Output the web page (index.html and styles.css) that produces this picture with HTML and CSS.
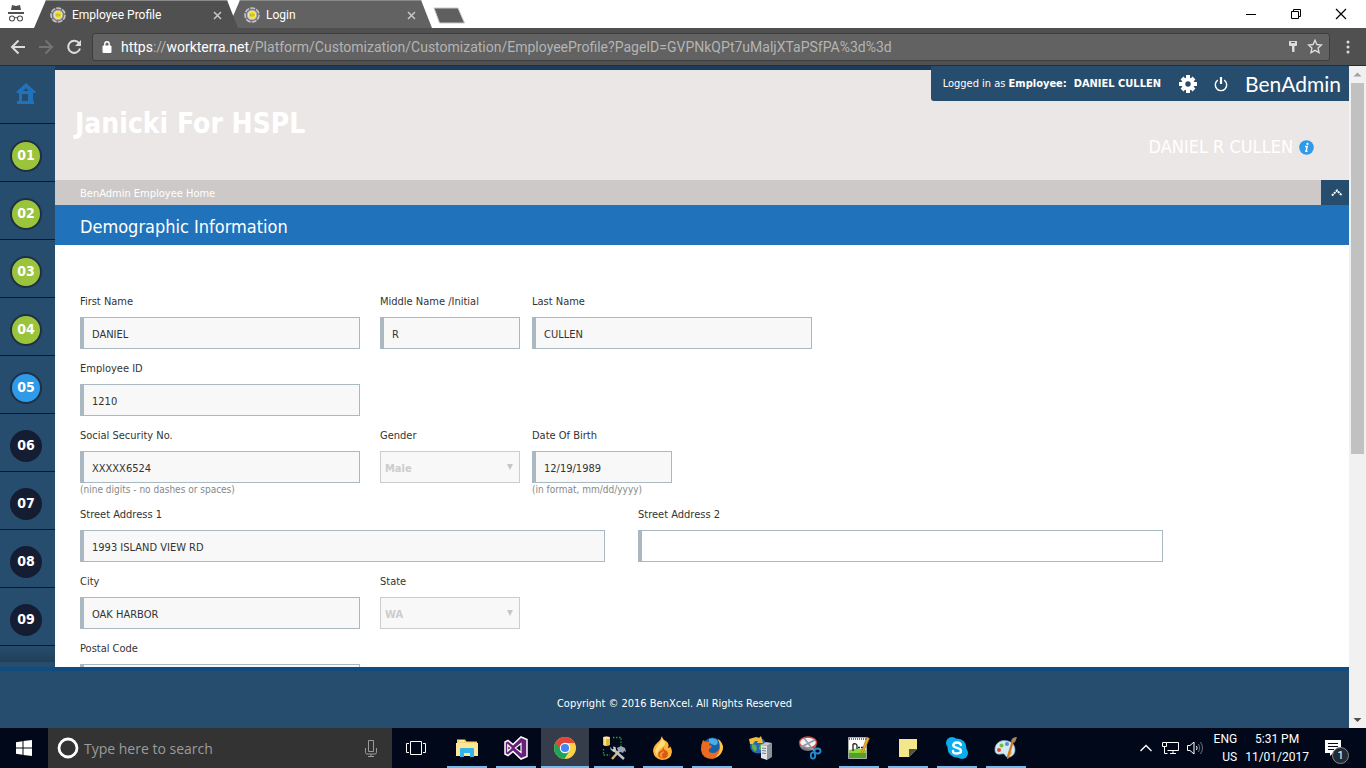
FILE: index.html
```html
<!DOCTYPE html>
<html lang="en">
<head>
<meta charset="utf-8">
<title>Employee Profile</title>
<link rel="stylesheet" href="styles.css">
</head>
<body>
<svg class="defs" width="0" height="0" aria-hidden="true">
  <symbol id="favicon" viewBox="0 0 16 16">
    <circle cx="8" cy="8" r="7" fill="#6d6d6d" stroke="#c4c4c4" stroke-width="1.600" stroke-dasharray="5 1.200"/>
    <circle cx="8" cy="8" r="4.800" fill="#e2e2e2" stroke="#adadad" stroke-width="1"/>
    <path d="M8 4l3 1.800v4L8 12 5 9.800v-4z" fill="#f4e41a"/>
    <path d="M6 7.300h4v1.500H6z" fill="#fbf27a" stroke="#b59b16" stroke-width=".7"/>
  </symbol>
  <symbol id="close" viewBox="0 0 9 9"><path d="M1 1l7 7M8 1L1 8" stroke="#c8c8c8" stroke-width="1.5" fill="none"/></symbol>
</svg>

<header class="tabstrip">
  <svg class="incognito" width="18" height="18" viewBox="0 0 18 18">
    <path d="M5 0l4 1 4-1 1 5H4zM1 7h16v2H1z" fill="#505050"/>
    <g fill="none" stroke="#505050" stroke-width="1.1"><circle cx="5" cy="13.5" r="2.5"/><circle cx="13" cy="13.5" r="2.5"/><path d="M7.4 13q1.6-1 3.200 0"/></g>
  </svg>
  <div class="tab tab-active">
    <svg width="16" height="16"><use href="#favicon"/></svg>
    <span class="tab-title">Employee Profile</span>
    <button class="plain" aria-label="Close tab"><svg width="9" height="9"><use href="#close"/></svg></button>
  </div>
  <div class="tab">
    <svg width="16" height="16"><use href="#favicon"/></svg>
    <span class="tab-title">Login</span>
    <button class="plain" aria-label="Close tab"><svg width="9" height="9"><use href="#close"/></svg></button>
  </div>
  <button class="plain new-tab" aria-label="New tab"><svg width="34" height="17" viewBox="0 0 34 17"><path d="M2 1h24l6.500 15h-25z" fill="#5f5f5f" stroke="#c9c9c9"/></svg></button>
  <div class="window-controls">
    <button class="plain" aria-label="Minimize"><svg width="12" height="12" viewBox="0 0 12 12"><path d="M1 6.500h10" stroke="#000"/></svg></button>
    <button class="plain" aria-label="Restore"><svg width="12" height="12" viewBox="0 0 12 12" fill="none" stroke="#000"><path d="M1.500 3.500h7v7h-7zM3.500 3.500v-2h7v7h-2"/></svg></button>
    <button class="plain" aria-label="Close"><svg width="12" height="12" viewBox="0 0 12 12"><path d="M1 1l10 10M11 1L1 11" stroke="#000" stroke-width="1.200"/></svg></button>
  </div>
</header>

<nav class="toolbar">
  <button class="plain" aria-label="Back"><svg width="16" height="16" viewBox="0 0 16 16"><path d="M15 8H2.500M8.500 1.500L2 8l6.500 6.500" fill="none" stroke="#dcdcdc" stroke-width="2"/></svg></button>
  <button class="plain" aria-label="Forward"><svg width="16" height="16" viewBox="0 0 16 16"><path d="M1 8h12.500M7.500 1.500L14 8l-6.500 6.500" fill="none" stroke="#747474" stroke-width="2"/></svg></button>
  <button class="plain" aria-label="Reload"><svg width="16" height="16" viewBox="0 0 16 16"><path d="M13 4.200A6 6 0 1 0 14 9.500" fill="none" stroke="#dcdcdc" stroke-width="2"/><path d="M15 1v6H9z" fill="#dcdcdc"/></svg></button>
  <div class="address">
    <svg width="10" height="12" viewBox="0 0 10 12"><path d="M1 5h8v6.500H1z" fill="#fff" stroke="#fff" stroke-linejoin="round"/><path d="M2.800 5V3a2.200 2.200 0 0 1 4.400 0v2" fill="none" stroke="#fff" stroke-width="1.400"/></svg>
    <span class="url" role="textbox" aria-label="Address"><b>https</b>://<b>workterra.net</b>/Platform/Customization/Customization/EmployeeProfile?PageID=GVPNkQPt7uMaljXTaPSfPA%3d%3d</span>
    <svg width="10" height="13" viewBox="0 0 10 13"><path d="M1 1.500Q1 1 1.500 1h7q.5 0 .5.500V5q0 1-1 1H6.500v6h-2l-.5-.8V6H2Q1 6 1 5z" fill="#dcdcdc"/><path d="M3 2.500h4" stroke="#626262" stroke-width="1.200"/></svg>
    <svg width="16" height="15" viewBox="0 0 16 15"><path d="M8 1.300l1.900 4.200 4.600.5-3.400 3.100.9 4.500L8 11.300l-4 2.300.9-4.500L1.500 6l4.600-.5z" fill="none" stroke="#dcdcdc" stroke-width="1.400"/></svg>
  </div>
  <button class="plain" aria-label="Menu"><svg width="4" height="14" viewBox="0 0 4 14" fill="#dcdcdc"><circle cx="2" cy="2" r="1.500"/><circle cx="2" cy="7" r="1.500"/><circle cx="2" cy="12" r="1.500"/></svg></button>
</nav>

<div class="viewport">
  <div class="page">
    <div class="page-body">
      <nav class="sidebar">
        <a class="step home" href="#" aria-label="Home"><svg width="20" height="21" viewBox="0 0 20 21"><path fill="#2073bb" fill-rule="evenodd" d="M10 0l9.500 8.500V10H17v8h1v3H1v-3h2v-8H.5V8.500zM10 5L7 8h6zM6 11v7h6v-7z"/></svg></a>
        <a class="step" href="#"><span class="dot done">01</span></a>
        <a class="step" href="#"><span class="dot done">02</span></a>
        <a class="step" href="#"><span class="dot done">03</span></a>
        <a class="step" href="#"><span class="dot done">04</span></a>
        <a class="step" href="#"><span class="dot current">05</span></a>
        <a class="step" href="#"><span class="dot">06</span></a>
        <a class="step" href="#"><span class="dot">07</span></a>
        <a class="step" href="#"><span class="dot">08</span></a>
        <a class="step" href="#"><span class="dot">09</span></a>
        <span class="more"></span>
      </nav>
      <main class="content">
        <header class="banner">
          <h1>Janicki For HSPL</h1>
          <p class="person">DANIEL R CULLEN
            <svg width="15" height="15" viewBox="0 0 15 15"><circle cx="7.500" cy="7.500" r="7.300" fill="#2f9be8"/><circle cx="8.500" cy="3.900" r="1.100" fill="#fff"/><path d="M6 6.500h2.200L7 11.300h1.500" fill="none" stroke="#fff" stroke-width="1.400"/></svg>
          </p>
          <div class="account">
            <span>Logged in as <b>Employee:&nbsp; DANIEL CULLEN</b></span>
            <button class="plain gear" aria-label="Settings"><svg width="18" height="18" viewBox="-9 -9 18 18"><g fill="#fff"><path d="M-2-9h4v18h-4z"/><path d="M-9-2H9v4H-9z"/><path d="M-2-8.500h4v17h-4z" transform="rotate(45)"/><path d="M-2-8.500h4v17h-4z" transform="rotate(-45)"/><circle r="6.500"/></g><circle r="2.700" fill="#264d6d"/></svg></button>
            <button class="plain power" aria-label="Log out"><svg width="14" height="16" viewBox="0 0 14 16" fill="none" stroke="#fff"><path d="M3.800 4.200a5.700 5.700 0 1 0 6.400 0" stroke-width="1.400"/><path d="M7 1v7" stroke-width="2.200"/></svg></button>
            <span class="brand">BenAdmin</span>
          </div>
        </header>
        <div class="crumbs">
          <a href="#">BenAdmin Employee Home</a>
          <button class="plain collapse" aria-label="Collapse header"><svg width="12" height="8" viewBox="0 0 12 8"><path d="M1 6.500l5-5 5 5" fill="none" stroke="#fff" stroke-width="2" stroke-dasharray="2 .8"/></svg></button>
        </div>
        <h2>Demographic Information</h2>
        <form class="form">
          <div class="row">
            <div class="field long"><label for="first">First Name</label><input id="first" value="DANIEL" readonly></div>
            <div class="field short"><label for="middle">Middle Name /Initial</label><input id="middle" value="R" readonly></div>
            <div class="field long"><label for="last">Last Name</label><input id="last" value="CULLEN" readonly></div>
          </div>
          <div class="row">
            <div class="field long"><label for="emp">Employee ID</label><input id="emp" value="1210" readonly></div>
          </div>
          <div class="row">
            <div class="field long"><label for="ssn">Social Security No.</label><input id="ssn" value="XXXXX6524" readonly><small>(nine digits - no dashes or spaces)</small></div>
            <div class="field short"><label for="gender">Gender</label><span class="select"><select id="gender" disabled><option>Male</option></select></span></div>
            <div class="field short"><label for="dob">Date Of Birth</label><input id="dob" value="12/19/1989" readonly><small>(in format, mm/dd/yyyy)</small></div>
          </div>
          <div class="row wide-gap">
            <div class="field street"><label for="street1">Street Address 1</label><input id="street1" value="1993 ISLAND VIEW RD" readonly></div>
            <div class="field street"><label for="street2">Street Address 2</label><input id="street2"></div>
          </div>
          <div class="row">
            <div class="field long"><label for="city">City</label><input id="city" value="OAK HARBOR" readonly></div>
            <div class="field short"><label for="state">State</label><span class="select"><select id="state" disabled><option>WA</option></select></span></div>
          </div>
          <div class="row">
            <div class="field long"><label for="zip">Postal Code</label><input id="zip" readonly></div>
          </div>
        </form>
      </main>
    </div>
    <footer class="footer">Copyright © 2016 BenXcel. All Rights Reserved</footer>
  </div>
  <div class="scrollbar">
    <svg width="17" height="17" viewBox="0 0 17 17"><path d="M8.500 6.500l4 4h-8z" fill="#a3a3a3"/></svg>
    <span class="track"><span class="thumb"></span></span>
    <svg width="17" height="17" viewBox="0 0 17 17"><path d="M8.500 11l4-4h-8z" fill="#505050"/></svg>
  </div>
</div>

<footer class="taskbar">
  <button class="plain start" aria-label="Start"><svg width="16" height="16" viewBox="0 0 16 16" fill="#fff"><path d="M0 2.200l6.500-.9v6.200H0zM7.500 1.100L16 0v7.500H7.500zM0 8.500h6.500v6.200L0 13.800zM7.500 8.500H16V16l-8.500-1.100z"/></svg></button>
  <div class="search">
    <svg width="22" height="22" viewBox="0 0 22 22"><circle cx="11" cy="11" r="9" fill="none" stroke="#fff" stroke-width="2.800"/></svg>
    <input type="text" placeholder="Type here to search" aria-label="Search">
    <svg width="12" height="17" viewBox="0 0 12 17" fill="none" stroke="#9b9b9b"><path d="M3.500.5h5v11h-5zM.5 8v4.500q0 1.500 1.500 1.500h8q1.500 0 1.500-1.500V8M6 14v2M3 16.500h6"/></svg>
  </div>
  <button class="plain app taskview" aria-label="Task view"><svg width="20" height="14" viewBox="0 0 20 14" fill="none" stroke="#fff"><path d="M4.500.5h11v13h-11zM3 2.500H.5v9H3M17 2.500h2.500v9H17"/></svg></button>
  <div class="apps">
    <button class="plain app open" aria-label="File Explorer"><svg width="22" height="20" viewBox="0 0 22 20"><path d="M1 1.500h8l1.500 2H21V18H1z" fill="#f8d56b"/><path d="M0 5h22v13H0z" fill="#fde89a"/><path d="M3 3h5" stroke="#fff"/><path d="M4 19v-8q0-1 1-1h12q1 0 1 1v8h-4v-4H8v4z" fill="#34b3e8"/></svg></button>
    <button class="plain app open" aria-label="Visual Studio"><svg width="24" height="24" viewBox="0 0 24 24"><path d="M17 1l6 2.500v17L17 23l-8-7.500L4 19.500 1 18V6l3-1.500 5 4z" fill="#68217a" stroke="#fff" stroke-width="1.500"/><path d="M17 7.500v9L11.500 12zM3.800 9v6L7 12z" fill="#00081a" stroke="#fff" stroke-width="1.200"/></svg></button>
    <button class="plain app open active" aria-label="Chrome"><svg width="22" height="22" viewBox="-11 -11 22 22"><circle r="11" fill="#fdd247"/><path d="M0 0L-9.500-5.500A11 11 0 0 1 9.500-5.500L10 -5H0z" fill="#e0463a"/><path d="M0 0l-9.500-5.500A11 11 0 0 0-.5 11L4.500 2.500z" fill="#1ea35c"/><path d="M-9.500-5.500L-4.300 2.500 0-5z" fill="#e0463a"/><circle r="5.200" fill="#fff"/><circle r="4.100" fill="#4285f4"/></svg></button>
    <button class="plain app open" aria-label="SQL tools"><svg width="24" height="24" viewBox="0 0 24 24"><path d="M1 2Q4.500-.5 8 2v7q-3.500 2-7 0z" fill="#e8b736"/><path d="M3 2v7.500" stroke="#fff0a8" stroke-width="1.500"/><ellipse cx="4.500" cy="1.800" rx="3.500" ry="1.300" fill="#ffe898"/><path d="M11 1.500h8v8M1.500 13v6H8" fill="none" stroke="#2e9a2e" stroke-width="1.300" stroke-dasharray="1.500 1.500"/><path d="M10 23l8-9" stroke="#e0b36c" stroke-width="2.400"/><path d="M12 14l10 9" stroke="#b9c3cd" stroke-width="2.500"/><path d="M8.500 10.500v3l3 2.500 2.500-2-.5-3-2.500-.5.500 2.500-1.500.5z" fill="#c8d0d8"/><path d="M15 12l4-2 4 2 1 4-2-1-1 2-5-2z" fill="#98a5b4"/></svg></button>
    <button class="plain app open" aria-label="Flame"><svg width="20" height="24" viewBox="0 0 20 24"><path d="M9 0Q8 4 4 7 0 11 0 15q1 8 9 9 9 0 10-8 0-3-2-6 0 2-2 2 2-4-2-7Q9 3 9 0z" fill="#ffb13a"/><path d="M9 1q0 3 3 5 1 3-4 6-4 3-4 8-4-5 1-11 4-4 4-8z" fill="#ffdc78"/><path d="M10 11q1 3 4 4 2 3 0 6-4 3-8 0-2-4 1-6 3-1 3-4z" fill="#dc5a12"/><path d="M11 15q0 2-2 3-1 2 1 4-4-1-3-4 1-2 4-3z" fill="#f49a45"/></svg></button>
    <button class="plain app open" aria-label="Firefox"><svg width="22" height="22" viewBox="0 0 22 22"><circle cx="11.500" cy="10" r="9.500" fill="#1b5fa6"/><path d="M8 2q4-2 8 1 2 3-1 5-4 1-7-3z" fill="#4aaee0"/><path d="M2 3l3 2q2-1 4 0 0 2-1 3l3 1q-1 3-3 3-1 4 4 4 4 0 6-4 2-5-1-10 5 4 5 9-1 8-10 11Q1 22 0 13 0 7 2 3z" fill="#ea6a1f"/><path d="M17 2q5 4 5 9-1 7-8 10 4-4 5-9 0-6-2-10z" fill="#fdc647"/></svg></button>
    <button class="plain app" aria-label="IIS"><svg width="24" height="24" viewBox="0 0 24 24"><circle cx="9" cy="9.500" r="8" fill="#2866b8"/><path d="M3 8l4 1 1 4-2 3-3-4zM11 8l5 2-3 5-3-2z" fill="#5bb245"/><path d="M0 3l7-2 3 1 2-2 2 7-6 0 1-2-3 0-2 3-3 0z" fill="#f0bf3f"/><path d="M12 9l6 1v14l-6-2z" fill="#e2e5e8"/><path d="M18 10l5-3v14l-5 3z" fill="#8b939b"/><path d="M12 9l5-3 6 1-5 3z" fill="#c3c8cd"/><path d="M13 12l4 .5M13 14.500l4 .5M13 17l4 .5" stroke="#727c85"/></svg></button>
    <button class="plain app" aria-label="Snipping Tool"><svg width="24" height="24" viewBox="0 0 24 24"><ellipse cx="10" cy="9" rx="8.500" ry="6" fill="#777c84"/><ellipse cx="10" cy="6.500" rx="8.500" ry="5.500" fill="#f4f4f6" stroke="#d63e43" stroke-width="1.300"/><path d="M3 11L17 4M6 2l10 13M3 10l14 4" stroke="#929aa2" stroke-width="1.500"/><g fill="none" stroke="#258dd2" stroke-width="1.800"><ellipse cx="19.500" cy="15" rx="3" ry="2.500"/><ellipse cx="15" cy="19.500" rx="2.200" ry="3.200"/></g></svg></button>
    <button class="plain app open" aria-label="Notepad++"><svg width="24" height="24" viewBox="0 0 24 24"><path d="M1.500 1.500h18v21h-18z" fill="#fff" stroke="#aaa"/><path d="M2 14q9-3 17 0v8H2z" fill="#8fd63c"/><path d="M2 17h17v5H2z" fill="#4da521"/><path d="M2 3h17" stroke="#777" stroke-width="2" stroke-dasharray="1 1"/><path d="M6 8v7M6 8q4-1 4 2v3M11 11.500h2M14 11.500h2" fill="none" stroke="#222" stroke-width="1.300"/><path d="M20 1l2.500 1.500L16 17l-2 1.500.5-3z" fill="#e7b324" stroke="#9b6a12" stroke-width=".6"/></svg></button>
    <button class="plain app open" aria-label="Sticky Notes"><svg width="18" height="18" viewBox="0 0 18 18"><path d="M0 0h18v10l-8 8H0z" fill="#f3e68d"/><path d="M10 10h8l-8 8z" fill="#57543a"/></svg></button>
    <button class="plain app open" aria-label="Skype"><svg width="22" height="22" viewBox="0 0 22 22"><circle cx="11" cy="11" r="9.500" fill="#0aaeef"/><circle cx="6" cy="6" r="6" fill="#0aaeef"/><circle cx="16" cy="16" r="6" fill="#0aaeef"/><path d="M15 8q-1-2.500-4-2.500T7.200 8q0 2 3.800 2.800T15 14t-4 2.500T7 14" fill="none" stroke="#fff" stroke-width="2.400" stroke-linecap="round"/></svg></button>
    <button class="plain app open" aria-label="Paint"><svg width="24" height="24" viewBox="0 0 24 24"><path d="M2 9q4-6 12-4 7 2 7 9 0 5-5 7-4 1-5-2-1-2-4-1-5 1-6-3-.5-3 1-6z" fill="#d5e8f3" stroke="#89a9be" stroke-width=".7"/><circle cx="5" cy="14" r="2" fill="#de4934"/><circle cx="7.500" cy="9.500" r="2" fill="#6ebd3d"/><circle cx="13" cy="8" r="2" fill="#4b92d6"/><circle cx="16" cy="17" r="2" fill="#e7c036"/><path d="M20 5l-5 17-2 1v-3l5-16z" fill="#d07b2a"/><path d="M17 5q1-4 6-4-1 4-3 6z" fill="#ac8256"/></svg></button>
  </div>
  <div class="tray">
    <svg class="chevron" width="12" height="8" viewBox="0 0 12 8"><path d="M.5 7L6 1.500 11.500 7" fill="none" stroke="#fff" stroke-width="1.300"/></svg>
    <svg width="17" height="14" viewBox="0 0 17 14" fill="none" stroke="#fff"><path d="M4.500 1.500h12v8h-11M8 12.500h6M11 10v2M.5 1.500h4v4h-4zM2.500 5.500v7h3"/></svg>
    <svg width="16" height="14" viewBox="0 0 16 14" fill="none" stroke="#fff"><path d="M.5 4.500h2.500l4-3.500v12L3 9.500H.5zM9.500 5q1.200 2 0 4"/><path d="M11.500 3q2.500 4 0 8M13.500 1q4 6 0 12" stroke="#677080"/></svg>
    <span class="stack lang"><span>ENG</span><span>US</span></span>
    <span class="stack clock"><span>5:31 PM</span><span>11/01/2017</span></span>
    <span class="notify"><svg width="16" height="16" viewBox="0 0 16 16"><path d="M0 0h16v13H8l-3 3v-3H0z" fill="#fff"/><path d="M3 3.500h10M3 6.500h10M3 9.500h6" stroke="#00081a"/></svg><span class="count">1</span></span>
  </div>
</footer>
</body>
</html>
```

FILE: styles.css
```css
* { box-sizing: border-box; }
body {
  margin: 0;
  height: 100vh;
  display: flex;
  flex-direction: column;
  overflow: hidden;
  background: #fff;
  color: #333;
  font: 11px/16px "DejaVu Sans Condensed", "Noto Sans", sans-serif;
}
svg { display: block; flex: none; }
.defs { position: absolute; }
.plain { border: 0; padding: 0; background: none; display: flex; align-items: center; justify-content: center; flex: none; }
a { color: inherit; text-decoration: none; }
h1, h2, p { margin: 0; }

/* Browser frame */
.tabstrip { display: flex; height: 28px; flex: none; align-items: center; color: #fff; font: 12px/16px Roboto, sans-serif; }
.incognito { margin: 0 9px 0 7px; }
.tab {
  width: 204px; height: 28px; padding: 2px 16px 0; margin-left: -10px;
  display: flex; align-items: center; gap: 6px;
  background: #626262; box-shadow: inset 0 1px #8a8a8a;
  clip-path: polygon(0 100%, 12px 0, 193px 0, 100% 100%);
}
.tab-active { background: #505050; position: relative; z-index: 1; margin-left: 0; }
.tab-title { flex: 1; }
.new-tab { margin-top: 3px; }
.window-controls { margin-left: auto; display: flex; gap: 33px; padding-right: 19px; }
.toolbar { display: flex; align-items: center; flex: none; height: 38px; padding: 0 16px 0 10px; gap: 12px; background: #505050; border-bottom: 1px solid #2c2c2c; }
.address { flex: 1; min-width: 0; display: flex; align-items: center; gap: 9px; height: 28px; padding: 0 6px 0 9px; margin: 0 4px 0 -2px; border: 1px solid #3d3d3d; border-radius: 3px; background: #626262; }
.url { flex: 1; min-width: 0; white-space: nowrap; overflow: hidden; color: #b4b4b4; font: 14px/20px Roboto, sans-serif; }
.url b { color: #fff; font-weight: 400; }

/* Page */
.viewport { flex: 1; min-height: 0; display: flex; }
.page { flex: 1; min-width: 0; display: flex; flex-direction: column; }
.page-body { flex: 1; min-height: 0; display: flex; overflow: hidden; }
.sidebar { width: 55px; flex: none; background: #264d6d; overflow: hidden; display: flex; flex-direction: column; }
.step { height: 58px; flex: none; display: flex; padding: 16px 0 0 10px; border-bottom: 1px solid #0b1a2b; }
.home { padding: 17px 0 0 16px; }
.dot { width: 32px; height: 32px; border-radius: 50%; border: 2px solid #151d33; background: #151d33; color: #fff; text-align: center; font: bold 14px/27px "DejaVu Sans Condensed", sans-serif; }
.done { background: #9ac43c; border-color: #1f2f45; }
.current { background: #2f9be8; border-color: #1f2f45; }
.more { height: 16px; flex: none; background: linear-gradient(#264d6d, #213f58); }

.content { flex: 1; min-width: 0; }
.banner { position: relative; height: 114px; padding: 0 35px 0 20px; border-top: 4px solid #1c3b5a; background: #ebe7e6; color: #fff; display: flex; justify-content: space-between; }
h1 { padding-top: 37px; font-size: 28px; line-height: 34px; }
.person { padding-top: 65px; display: flex; align-items: center; align-self: flex-start; gap: 6px; font-size: 18px; line-height: 24px; }
.account { position: absolute; top: -4px; right: 0; height: 35px; padding: 0 8px 0 12px; display: flex; align-items: center; background: #264d6d; border-radius: 0 0 0 3px; }
.gear { margin-left: 18px; }
.power { margin: 0 17px; }
.brand { font: 21px/28px Lato, sans-serif; }
.crumbs { display: flex; justify-content: space-between; height: 25px; padding-left: 25px; background: #cdc9c8; color: #fff; line-height: 27px; }
.collapse { width: 28px; padding-left: 4px; background: #264d6d; }
h2 { padding: 4px 0 0 25px; background: #2073bb; color: #fff; font-size: 18px; font-weight: 400; line-height: 36px; }

.form { padding: 49px 25px 0; display: grid; gap: 12px; }
.row { display: flex; gap: 12px; }
.row .long:first-child { margin-right: 8px; }
.wide-gap { gap: 33px; }
.field { display: flex; flex-direction: column; flex: 0 1 auto; min-width: 0; }
.long { width: 280px; }
.short { width: 140px; }
.street { width: 525px; }
.field label { margin-bottom: 7px; white-space: nowrap; }
.field input { width: 100%; height: 32px; padding: 3px 8px 0; border: 1px solid #a9b8c1; border-left-width: 4px; background: #fff; color: #333; font: inherit; outline: 0; }
.field input[readonly] { background: #f8f8f8; }
.field small { height: 12px; color: #888; font-size: 10px; line-height: 14px; white-space: nowrap; }
.select { position: relative; }
.select::after { content: ""; position: absolute; right: 7px; top: 13px; border: 3px solid transparent; border-top: 6px solid #c6c6c6; }
.select select { appearance: none; width: 100%; height: 32px; padding: 3px 4px 0; border: 1px solid #ccc; border-radius: 0; background: #f8f8f8; color: #ccc; font: inherit; font-weight: 600; opacity: 1; }

.footer { flex: none; height: 61px; border-top: 4px solid #0f4d80; background: #264d6d; color: #fff; text-align: center; line-height: 66px; }
.scrollbar { width: 17px; flex: none; display: flex; flex-direction: column; background: #f1f1f1; }
.track { flex: 1; padding: 0 2px; }
.thumb { display: block; height: 59%; background: #c1c1c1; }

/* Taskbar */
.taskbar { flex: none; display: flex; height: 40px; background: #00081a; color: #fff; }
.start { width: 48px; }
.search { width: 344px; display: flex; align-items: center; padding: 0 15px 0 9px; gap: 5px; background: #333; }
.search input { flex: 1; min-width: 0; border: 0; padding: 2px 0 0; background: none; color: #fff; font: 14px/24px "Open Sans", sans-serif; }
.search input::placeholder { color: #9b9b9b; opacity: 1; }
.app { position: relative; width: 48px; height: 40px; }
.taskview { margin-right: 3px; }
.apps { display: flex; gap: 1px; }
.open::after { content: ""; position: absolute; left: 4px; right: 4px; bottom: 0; height: 2px; background: #76b9ed; }
.active { background: #353c4a; }
.active::after { left: 0; right: 0; }
.tray { margin-left: auto; display: flex; align-items: center; gap: 8px; padding-right: 25px; font: 12px/18px Roboto, sans-serif; }
.chevron { margin-right: 2px; }
.stack { display: flex; flex-direction: column; text-align: right; }
.lang { margin-left: 3px; }
.clock { text-align: center; }
.notify { position: relative; margin-left: 8px; }
.count { position: absolute; left: 7px; top: 7px; width: 17px; height: 17px; border: 1px solid #888; border-radius: 50%; background: #222a33; font-size: 11px; line-height: 15px; text-align: center; }
```
